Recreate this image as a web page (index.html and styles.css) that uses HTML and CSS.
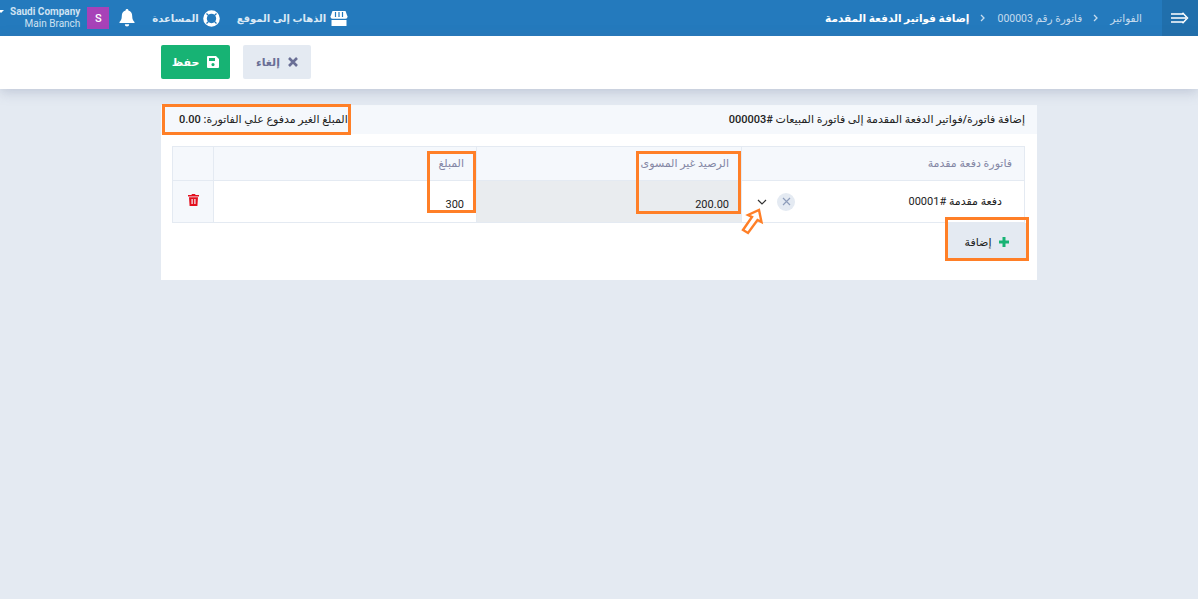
FILE: index.html
```html
<!DOCTYPE html>
<html lang="ar" dir="rtl">
<head>
<meta charset="utf-8">
<title>إضافة فواتير الدفعة المقدمة</title>
<link rel="stylesheet" href="styles.css">
</head>
<body>
<header class="nav">
  <button class="nav-toggle" aria-label="menu">
    <svg width="18" height="12" viewBox="0 0 18 12"><path d="M0 2h12M0 6h15M0 10h12M11.500 .7 16.500 6l-5 5.300" fill="none" stroke="#fff" stroke-width="1.500"/></svg>
  </button>
  <nav class="crumbs">
    <span class="crumb">الفواتير</span>
    <svg class="chev" width="6" height="8" viewBox="0 0 6 8"><path d="M1 1l3 3-3 3" fill="none" stroke="#c6dcee" stroke-width="1.300"/></svg>
    <span class="crumb">فاتورة رقم 000003</span>
    <svg class="chev" width="6" height="8" viewBox="0 0 6 8"><path d="M1 1l3 3-3 3" fill="none" stroke="#c6dcee" stroke-width="1.300"/></svg>
    <span class="crumb-current">إضافة فواتير الدفعة المقدمة</span>
  </nav>
  <div class="nav-tools">
    <a class="tool">
      <svg width="18" height="17" viewBox="0 0 18 17"><path d="M2.500 1h13l2 5.500a2.200 2.200 0 0 1-2 2.300H2.500a2.200 2.200 0 0 1-2-2.300z" fill="#fff"/><path d="M5.500 2v5M9 2v5M12.500 2v5" stroke="#247abd" stroke-width="1.200"/><path d="M1.500 10h15v6h-15z" fill="#fff"/></svg>
      <span>الذهاب إلى الموقع</span>
    </a>
    <a class="tool">
      <svg width="17" height="17" viewBox="0 0 17 17"><circle cx="8.500" cy="8.500" r="6.500" fill="none" stroke="#fff" stroke-width="3.600"/><path d="M3.500 3.500l3 3M13.500 3.500l-3 3M3.500 13.500l3-3M13.500 13.500l-3-3" stroke="#247abd" stroke-width="1.300"/></svg>
      <span>المساعدة</span>
    </a>
    <svg class="bell" width="16" height="18" viewBox="0 0 16 18"><path d="M8 0a1.400 1.400 0 0 1 1.400 1.500C12 2.200 13.200 4.300 13.200 7c0 3.500 1 4.700 2.300 6v1H.5v-1c1.300-1.300 2.300-2.500 2.300-6 0-2.700 1.200-4.800 3.800-5.500A1.400 1.400 0 0 1 8 0z" fill="#fff"/><path d="M5.800 15.200h4.400a2.200 2.200 0 0 1-4.400 0z" fill="#fff"/></svg>
    <div class="avatar">S</div>
    <div class="company">
      <div class="company-name">Saudi Company<span class="caret"></span></div>
      <div class="company-branch">Main Branch</div>
    </div>
  </div>
</header>
<section class="toolbar">
  <div class="container toolbar-row">
    <button class="btn btn-cancel">
      <svg width="10" height="10" viewBox="0 0 10 10"><path d="M1 1l8 8M9 1l-8 8" stroke="#6a6f96" stroke-width="2.600"/></svg>
      <span>إلغاء</span>
    </button>
    <button class="btn btn-save">
      <svg width="12" height="12" viewBox="0 0 12 12"><path fill-rule="evenodd" d="M1 0h8l3 3v8a1 1 0 0 1-1 1H1a1 1 0 0 1-1-1V1a1 1 0 0 1 1-1zM2 2v3h6V2zm4 5a1.600 1.600 0 1 0 0 3.200A1.600 1.600 0 0 0 6 7z" fill="#fff"/></svg>
      <span>حفظ</span>
    </button>
  </div>
</section>
<main class="container panel">
  <div class="panel-head">
    <span>إضافة فاتورة/فواتير الدفعة المقدمة إلى فاتورة المبيعات #000003</span>
    <span>المبلغ الغير مدفوع علي الفاتورة: 0.00</span>
  </div>
  <div class="panel-body">
    <table class="grid">
      <thead>
        <tr>
          <th class="col-invoice">فاتورة دفعة مقدمة</th>
          <th class="col-balance">الرصيد غير المسوى</th>
          <th class="col-amount">المبلغ</th>
          <th class="col-del"></th>
        </tr>
      </thead>
      <tbody>
        <tr>
          <td class="col-invoice">
            <div class="select">
              <span class="select-value">دفعة مقدمة #00001</span>
              <span class="select-clear"><svg width="9" height="9" viewBox="0 0 9 9"><path d="M1 1l7 7M8 1L1 8" stroke="#8e9dbb" stroke-width="1.200"/></svg></span>
              <svg class="select-arrow" width="10" height="6" viewBox="0 0 10 6"><path d="M1 1l4 4 4-4" fill="none" stroke="#333" stroke-width="1.200"/></svg>
            </div>
          </td>
          <td class="col-balance cell-num cell-disabled">200.00</td>
          <td class="col-amount cell-num">300</td>
          <td class="col-del cell-del">
            <svg width="11" height="12" viewBox="0 0 11 12"><path fill-rule="evenodd" d="M4 0h3l.6 1H11v1.500H0V1h3.400zM1 3.300h9l-.6 8.700H1.600zM3.500 5v5h1.200V5zm2.800 0v5h1.200V5z" fill="#e3101f"/></svg>
          </td>
        </tr>
      </tbody>
    </table>
    <button class="btn-add">
      <svg width="10" height="10" viewBox="0 0 10 10"><path d="M5 0v10M0 5h10" stroke="#17b374" stroke-width="3"/></svg>
      <span>إضافة</span>
    </button>
  </div>
</main>
<div class="mark mark-due"></div>
<div class="mark mark-amount"></div>
<div class="mark mark-balance"></div>
<div class="mark mark-add"></div>
<svg class="mark-arrow" width="24" height="28" viewBox="0 0 24 28"><path d="M19 2l2.500 12-4-2-9.500 13-5-3 9-13-4-2z" fill="#fff" stroke="#ff7f27" stroke-width="2.400"/></svg>
</body>
</html>
```
FILE: styles.css
```css
* { box-sizing: border-box; }
html, body { margin: 0; height: 100%; }
body {
  background: #e4eaf2;
  font-family: Roboto, "DejaVu Sans", sans-serif;
  font-size: 11px;
  color: #222;
  position: relative;
  overflow: hidden;
}
button { font: inherit; border: 0; padding: 0; }
.nav {
  height: 36px;
  background: #247abd;
  display: flex;
  align-items: center;
  color: #fff;
}
.nav-toggle {
  width: 36px;
  height: 36px;
  background: #206fac;
  display: flex;
  align-items: center;
  justify-content: center;
}
.crumbs {
  display: flex;
  align-items: center;
  gap: 11px;
  margin-right: 20px;
  font-size: 10.500px;
  color: #c6dcee;
}
.crumb-current { color: #fff; font-weight: 700; }
.nav-tools {
  margin-right: auto;
  display: flex;
  align-items: center;
  padding-left: 10px;
}
.tool {
  display: flex;
  align-items: center;
  gap: 4px;
  margin-left: 17px;
  font-size: 10px;
  font-weight: 700;
  color: #dbe9f5;
}
.bell { margin-left: 10px; }
.bell { margin-right: 0; }
.avatar {
  width: 22px;
  height: 22px;
  background: #a742b8;
  color: #fff;
  font-size: 11px;
  font-weight: 500;
  display: flex;
  align-items: center;
  justify-content: center;
  margin-left: 7px;
}
.company { direction: ltr; text-align: right; font-size: 10px; font-weight: 700; color: #cfe2f2; line-height: 12px; }
.company-name { display: flex; flex-direction: row-reverse; justify-content: flex-end; align-items: center; }
.company-name { flex-direction: row; justify-content: flex-end; position: relative; }
.caret {
  position: absolute;
  left: -12px;
  top: 4px;
  border: 3px solid transparent;
  border-top: 3px solid #fff;
}
.company-branch { font-weight: 400; }
.toolbar {
  height: 53px;
  background: #fff;
  box-shadow: 0 3px 12px rgba(90, 105, 140, .28);
  position: relative;
}
.container { width: 876px; margin: 0 auto; }
.toolbar-row {
  height: 100%;
  display: flex;
  align-items: center;
  justify-content: flex-end;
  gap: 13px;
  padding-bottom: 1px;
}
.btn {
  height: 34px;
  border-radius: 2px;
  display: flex;
  align-items: center;
  justify-content: center;
  gap: 8px;
  font-size: 11px;
  font-weight: 700;
}
.btn-cancel { width: 68px; background: #e4eaf2; color: #6a6f96; }
.btn-save { width: 69px; background: #17b374; color: #fff; }
.panel { margin-top: 16px; background: #fff; height: 175px; }
.panel-head {
  height: 29px;
  background: #f5f8fc;
  display: flex;
  align-items: center;
  justify-content: space-between;
  padding: 0 12px 0 18px;
  font-size: 11px;
  font-weight: 500;
}
.panel-body { padding: 12px 12px 0; }
.grid {
  width: 852px;
  border-collapse: collapse;
  table-layout: fixed;
  font-size: 11px;
}
.grid th, .grid td { border: 1px solid #e4eaf2; padding: 0 12px; text-align: right; }
.grid th { height: 34px; background: #f5f8fc; color: #8487a5; font-weight: 400; }
.grid td { height: 42px; }
.col-invoice { width: 283px; }
.col-balance { width: 265px; }
.col-amount { width: 263px; }
.col-del { width: 41px; }
.grid .cell-num { padding-top: 6px; text-align: left; direction: ltr; text-align: right; }
.grid .cell-disabled { background: #e9ecef; }
.grid .cell-del { background: #f5f8fc; text-align: center; padding: 0; }
.select { display: flex; align-items: center; padding-right: 10px; }
.select-value { width: 207px; }
.select-clear {
  width: 18px;
  height: 18px;
  border-radius: 50%;
  background: #e4eaf2;
  display: flex;
  align-items: center;
  justify-content: center;
}
.select-arrow { margin-right: 10px; }
.btn-add {
  display: flex;
  align-items: center;
  gap: 8px;
  justify-content: center;
  width: 78px;
  height: 38px;
  margin-top: -1px;
  margin-right: -1px;
  background: #e4eaf2;
  color: #222;
  font-size: 11px;
  font-weight: 500;
  position: relative;
  top: 0;
  border: 0;
  margin-top: 0;
}
.mark { position: absolute; border: 3px solid #ff7f27; pointer-events: none; }
.mark-due { left: 162px; top: 104px; width: 189px; height: 31px; }
.mark-amount { left: 427px; top: 151px; width: 49px; height: 62px; }
.mark-balance { left: 636px; top: 151px; width: 105px; height: 63px; }
.mark-add { left: 945px; top: 217px; width: 84px; height: 44px; }
.mark-arrow { position: absolute; left: 740px; top: 208px; }
```
